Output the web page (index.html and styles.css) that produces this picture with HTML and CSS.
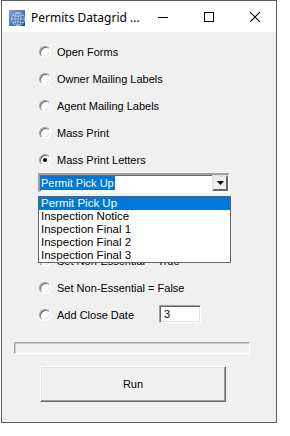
FILE: index.html
```html
<!DOCTYPE html>
<html lang="en">
<head>
  <meta charset="UTF-8" />
  <title>Permits Datagrid Options</title>
  <link rel="stylesheet" href="styles.css">
</head>
<body>
  <div class="window">
    <div class="titlebar">
      <svg class="app-icon" width="16" height="16" viewBox="0 0 16 16">
        <defs>
          <linearGradient id="globe" x1="0" y1="0" x2="1" y2="1">
            <stop offset="0" stop-color="#7aa6dc" />
            <stop offset="1" stop-color="#1d4f93" />
          </linearGradient>
        </defs>
        <rect x="0" y="0" width="16" height="16" fill="url(#globe)" />
        <g fill="none" stroke="#cfe0f5" stroke-width="0.8" opacity="0.85">
          <circle cx="9" cy="9" r="6.5" />
          <ellipse cx="9" cy="9" rx="3" ry="6.5" />
          <line x1="9" y1="2.5" x2="9" y2="15.5" />
          <line x1="2.5" y1="9" x2="15.5" y2="9" />
          <path d="M3.5 5.5 Q9 7 14.5 5.5" />
          <path d="M3.5 12.5 Q9 11 14.5 12.5" />
        </g>
      </svg>
      <span class="title">Permits Datagrid ...</span>
      <div class="caption-buttons">
        <span class="cap-btn">
          <svg width="10" height="10" viewBox="0 0 10 10"><line x1="0" y1="5.5" x2="10" y2="5.5" stroke="#000" stroke-width="1" /></svg>
        </span>
        <span class="cap-btn">
          <svg width="10" height="10" viewBox="0 0 10 10"><rect x="0.5" y="0.5" width="9" height="9" fill="none" stroke="#000" stroke-width="1" /></svg>
        </span>
        <span class="cap-btn">
          <svg width="10" height="10" viewBox="0 0 10 10"><path d="M0 0 L10 10 M10 0 L0 10" stroke="#000" stroke-width="1.1" /></svg>
        </span>
      </div>
    </div>

    <div class="client">
      <div class="options">
        <label class="opt"><span class="radio"></span>Open Forms</label>
        <label class="opt"><span class="radio"></span>Owner Mailing Labels</label>
        <label class="opt"><span class="radio"></span>Agent Mailing Labels</label>
        <label class="opt"><span class="radio"></span>Mass Print</label>
        <label class="opt"><span class="radio checked"></span>Mass Print Letters</label>

        <div class="combo">
          <div class="combo-field"><span class="combo-text">Permit Pick Up</span></div>
          <span class="combo-btn">
            <svg width="7" height="4" viewBox="0 0 7 4"><path d="M0 0 H7 L3.5 4 Z" fill="#000" /></svg>
          </span>
          <ul class="combo-list">
            <li class="selected">Permit Pick Up</li>
            <li>Inspection Notice</li>
            <li>Inspection Final 1</li>
            <li>Inspection Final 2</li>
            <li>Inspection Final 3</li>
          </ul>
        </div>

        <label class="opt opt-gap"><span class="radio"></span>Set Non-Essential = True</label>
        <label class="opt"><span class="radio"></span>Set Non-Essential = False</label>
        <label class="opt"><span class="radio"></span><span class="opt-text">Add Close Date</span><span class="textbox">3</span></label>
      </div>

      <div class="progress"></div>

      <button class="run">Run</button>
    </div>
  </div>
</body>
</html>
```

FILE: styles.css
```css
body {
  margin: 0;
  background: #fff;
  font-family: "Liberation Sans", Arial, sans-serif;
  font-size: 11px;
  color: #000;
}
.window {
  margin-left: 1px;
  width: 274px;
  height: 421px;
  border: 1px solid #5e5e52;
  background: #f0f0f0;
  display: flex;
  flex-direction: column;
}

/* title bar */
.titlebar {
  height: 31px;
  background: #fff;
  display: flex;
  align-items: center;
  flex-shrink: 0;
}
.app-icon {
  margin-left: 7px;
  margin-top: 2px;
  flex-shrink: 0;
}
.title {
  margin-left: 6px;
  margin-top: 2px;
  font-family: "Noto Sans", sans-serif;
  font-size: 12px;
  white-space: nowrap;
}
.caption-buttons {
  margin-left: auto;
  display: flex;
  height: 100%;
  flex-shrink: 0;
}
.cap-btn {
  width: 46px;
  display: flex;
  align-items: center;
  justify-content: center;
}

/* client area */
.client {
  padding-top: 6px;
  display: flex;
  flex-direction: column;
}
.options {
  padding-left: 37px;
  display: flex;
  flex-direction: column;
}
.opt {
  height: 27px;
  display: flex;
  align-items: center;
}
.opt-gap {
  margin-top: 54px;
}
.radio {
  width: 10px;
  height: 10px;
  border-radius: 50%;
  border: 1px solid;
  border-color: #a0a0a0 #fff #fff #a0a0a0;
  box-shadow: inset 1px 1px #696969, inset -1px -1px #e3e3e3;
  background: #fff;
  margin-right: 6px;
  position: relative;
}
.radio.checked::after {
  content: "";
  position: absolute;
  left: 3px;
  top: 3px;
  width: 4px;
  height: 4px;
  border-radius: 50%;
  background: #000;
}
.opt-text {
  width: 102px;
}
.textbox {
  width: 36px;
  height: 16px;
  margin-top: -1px;
  border: 1px solid;
  border-color: #a0a0a0 #fff #fff #a0a0a0;
  box-shadow: inset 1px 1px #696969, inset -1px -1px #e3e3e3;
  background: #fff;
  padding-left: 4px;
  line-height: 17px;
}

/* combo box */
.combo {
  position: relative;
  margin-left: -1px;
  width: 188px;
  height: 16px;
  border: 2px solid;
  border-color: #a0a0a0 #fff #fff #a0a0a0;
  box-shadow: inset 1px 1px #696969;
  background: #fff;
  display: flex;
}
.combo-field {
  flex: 1;
  padding-top: 1px;
}
.combo-text {
  display: inline-block;
  background: #0078d7;
  color: #fff;
  line-height: 14px;
  padding: 0 1px;
}
.combo-btn {
  width: 12px;
  height: 12px;
  border: 2px solid;
  border-color: #e3e3e3 #696969 #696969 #e3e3e3;
  background: #f0f0f0;
  display: flex;
  align-items: center;
  justify-content: center;
}
.combo-list {
  position: absolute;
  left: -2px;
  top: 21px;
  width: 191px;
  margin: 0;
  padding: 0;
  list-style: none;
  border: 1px solid #646464;
  background: #fff;
  z-index: 2;
}
.combo-list li {
  height: 13px;
  line-height: 13px;
  padding-left: 2px;
  font-size: 11.5px;
}
.combo-list li.selected {
  background: #0078d7;
  color: #fff;
}

/* progress bar + button */
.progress {
  margin: 14px 0 0 12px;
  width: 234px;
  height: 10px;
  border: 1px solid;
  border-color: #a0a0a0 #fff #fff #a0a0a0;
  box-shadow: inset 1px 1px #cfcfcf;
  background: #f0f0f0;
}
.run {
  margin: 12px 0 0 38px;
  width: 186px;
  height: 36px;
  border: 1px solid;
  border-color: #fff #696969 #696969 #fff;
  box-shadow: inset -1px -1px #a0a0a0, inset 1px 1px #e3e3e3;
  background: #f0f0f0;
  font-family: "Liberation Sans", Arial, sans-serif;
  font-size: 11px;
  color: #000;
  padding: 0;
}
```
